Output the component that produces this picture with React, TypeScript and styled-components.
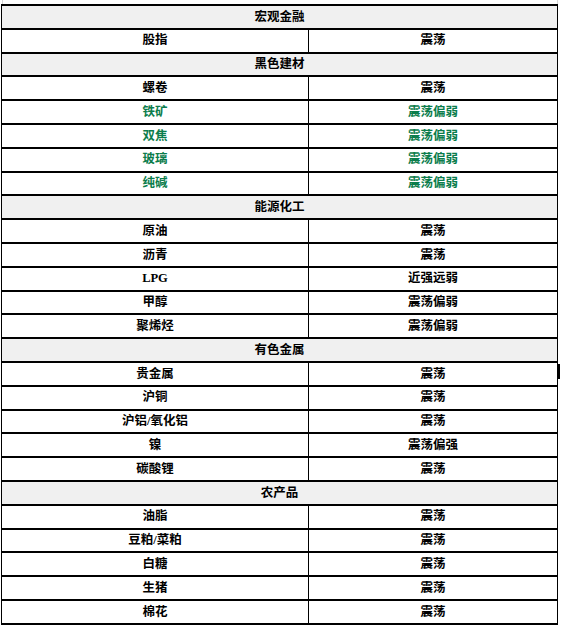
import React from "react";
import styled, { createGlobalStyle } from "styled-components";

const GlobalStyle = createGlobalStyle`
  html, body { margin: 0; padding: 0; background: #ffffff; }
  body { font-family: "Liberation Serif", "Noto Sans CJK SC", serif; }
`;

type Tone = "normal" | "green";
type Item = { name: string; view: string; tone?: Tone };
type Section = { title: string; items: Item[] };

const sections: Section[] = [
  { title: "宏观金融", items: [{ name: "股指", view: "震荡" }] },
  {
    title: "黑色建材",
    items: [
      { name: "螺卷", view: "震荡" },
      { name: "铁矿", view: "震荡偏弱", tone: "green" },
      { name: "双焦", view: "震荡偏弱", tone: "green" },
      { name: "玻璃", view: "震荡偏弱", tone: "green" },
      { name: "纯碱", view: "震荡偏弱", tone: "green" },
    ],
  },
  {
    title: "能源化工",
    items: [
      { name: "原油", view: "震荡" },
      { name: "沥青", view: "震荡" },
      { name: "LPG", view: "近强远弱" },
      { name: "甲醇", view: "震荡偏弱" },
      { name: "聚烯烃", view: "震荡偏弱" },
    ],
  },
  {
    title: "有色金属",
    items: [
      { name: "贵金属", view: "震荡" },
      { name: "沪铜", view: "震荡" },
      { name: "沪铝/氧化铝", view: "震荡" },
      { name: "镍", view: "震荡偏强" },
      { name: "碳酸锂", view: "震荡" },
    ],
  },
  {
    title: "农产品",
    items: [
      { name: "油脂", view: "震荡" },
      { name: "豆粕/菜粕", view: "震荡" },
      { name: "白糖", view: "震荡" },
      { name: "生猪", view: "震荡" },
      { name: "棉花", view: "震荡" },
    ],
  },
];

const Page = styled.div`
  position: relative;
  width: 561px;
  height: 627px;
  padding-left: 1px;
  box-sizing: border-box;
`;

const CutEdge = styled.div`
  height: 4px;
  width: 556px;
  margin-left: 1px;
  box-sizing: border-box;
  border-left: 1px solid #d6d6d6;
  border-right: 1px solid #d6d6d6;
`;

const Table = styled.table`
  width: 556px;
  border-collapse: collapse;
  table-layout: fixed;
  border-top: 2px solid #000;
  border-bottom: 2px solid #000;
  border-left: 1px solid #000;
  border-right: 1px solid #000;
`;

const Row = styled.tr`
  height: 23.8px;
`;

const Cell = styled.td<{ $tone?: Tone }>`
  border-top: 2px solid #000;
  border-bottom: 2px solid #000;
  border-left: 1px solid #000;
  border-right: 1px solid #000;
  padding: 0;
  text-align: center;
  vertical-align: middle;
  font-size: 12.5px;
  font-weight: 700;
  line-height: 1;
  color: ${(p) => (p.$tone === "green" ? "#0b7d4c" : "#000")};
`;

const HeadCell = styled(Cell)`
  background: #f0f0f0;
`;

const Caret = styled.div`
  position: absolute;
  left: 558px;
  top: 364px;
  width: 2px;
  height: 15px;
  background: #000;
`;

export default function App() {
  return (
    <>
      <GlobalStyle />
      <Page>
        <CutEdge />
        <Table>
          <colgroup>
            <col style={{ width: 307 }} />
            <col style={{ width: 249 }} />
          </colgroup>
          <tbody>
            {sections.map((s) => (
              <React.Fragment key={s.title}>
                <Row>
                  <HeadCell colSpan={2}>{s.title}</HeadCell>
                </Row>
                {s.items.map((it) => (
                  <Row key={it.name}>
                    <Cell $tone={it.tone}>{it.name}</Cell>
                    <Cell $tone={it.tone}>{it.view}</Cell>
                  </Row>
                ))}
              </React.Fragment>
            ))}
          </tbody>
        </Table>
        <Caret />
      </Page>
    </>
  );
}
